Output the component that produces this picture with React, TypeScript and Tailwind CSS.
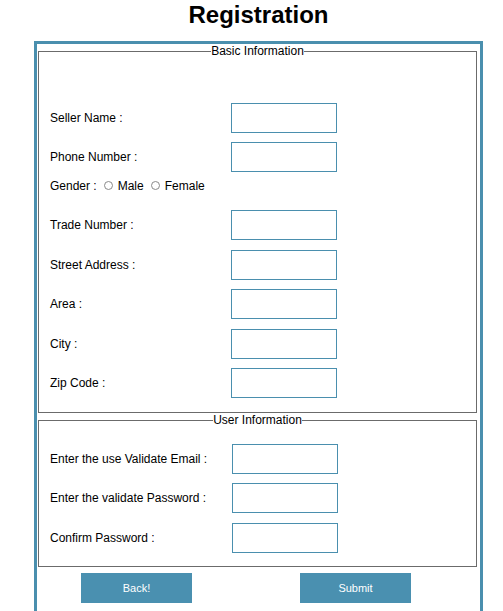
import React from "react";

const font = { fontFamily: '"Liberation Sans", Arial, sans-serif' };

interface RowProps {
  label: string;
  top: string;
  labelWidth?: string;
}

const Row: React.FC<RowProps> = ({ label, top, labelWidth = "w-[181px]" }) => (
  <div className={`flex items-center h-[30px] ${top}`}>
    <label className={`${labelWidth} text-[12px] text-black`}>{label}</label>
    <input
      type="text"
      className="w-[106px] h-[30px] border border-[#4a8fae] bg-white outline-none"
    />
  </div>
);

const Radio: React.FC<{ label: string }> = ({ label }) => (
  <span className="flex items-center">
    <span className="inline-block w-[9px] h-[9px] rounded-full border border-[#8a8a8a] bg-white" />
    <span className="ml-[5px]">{label}</span>
  </span>
);

export default function App() {
  return (
    <div className="bg-white w-[503px] h-[611px] overflow-hidden" style={font}>
      <div className="w-[449px] ml-[34px]">
        <h1 className="h-[41px] pt-px text-center text-[24px] leading-[28px] font-bold text-black">
          Registration
        </h1>
        <div className="border-[3px] border-[#4a8fae] border-b-0 pb-[40px]">
          <fieldset className="ml-px mr-[3px] border border-[#6b6b6b] px-[11px] pb-[14px]">
            <legend className="mx-auto text-[12px] leading-[14px] text-black">Basic Information</legend>
            <Row label="Seller Name :" top="mt-[45px]" />
            <Row label="Phone Number :" top="mt-[9px]" />
            <div className="flex items-center h-[26px] pt-px text-[12px] text-black">
              <span>Gender :</span>
              <span className="ml-[7px]">
                <Radio label="Male" />
              </span>
              <span className="ml-[7px]">
                <Radio label="Female" />
              </span>
            </div>
            <Row label="Trade Number :" top="mt-[12px]" />
            <Row label="Street Address :" top="mt-[10px]" />
            <Row label="Area :" top="mt-[9px]" />
            <Row label="City :" top="mt-[10px]" />
            <Row label="Zip Code :" top="mt-[9px]" />
          </fieldset>
          <fieldset className="ml-px mr-[3px] border border-[#6b6b6b] px-[11px] pb-[13px]">
            <legend className="mx-auto text-[12px] leading-[14px] text-black">User Information</legend>
            <Row label="Enter the use Validate Email :" top="mt-[17px]" labelWidth="w-[182px]" />
            <Row label="Enter the validate Password :" top="mt-[9px]" labelWidth="w-[182px]" />
            <Row label="Confirm Password :" top="mt-[10px]" labelWidth="w-[182px]" />
          </fieldset>
          <div className="flex pl-[44px] gap-[108px] mt-[6px]">
            <button className="w-[111px] h-[30px] bg-[#4a90b0] text-white text-[11px]">Back!</button>
            <button className="w-[111px] h-[30px] bg-[#4a90b0] text-white text-[11px]">Submit</button>
          </div>
        </div>
      </div>
    </div>
  );
}
